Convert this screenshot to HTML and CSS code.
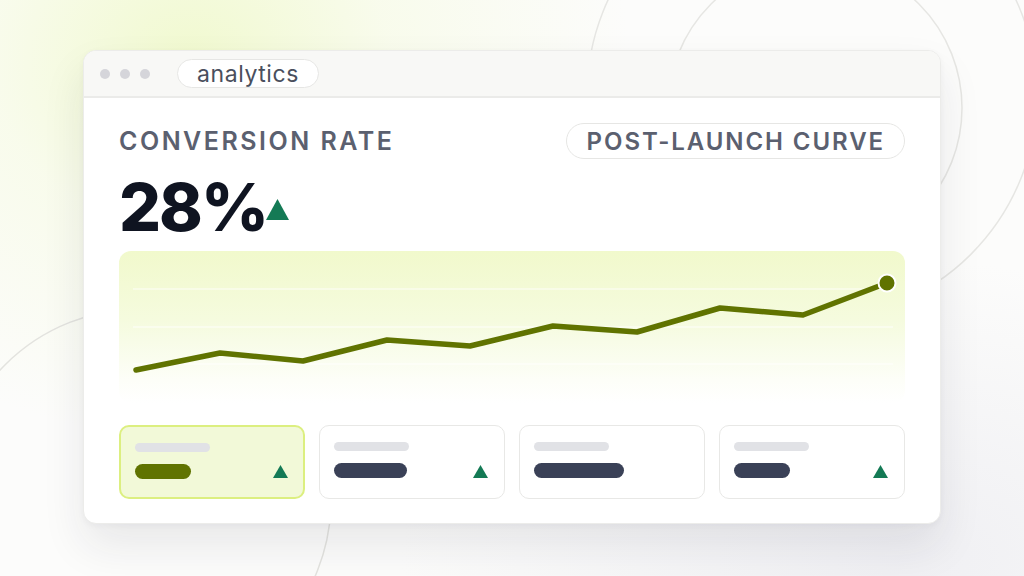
FILE: index.html
```html
<!DOCTYPE html>
<html lang="en">
<head>
<meta charset="utf-8">
<title>analytics</title>
<link rel="stylesheet" href="styles.css">
</head>
<body>
<svg class="backdrop" width="1024" height="576" viewBox="0 0 1024 576" aria-hidden="true">
  <circle cx="812" cy="95" r="225" fill="none" stroke="#e6e6e3" stroke-width="1.5"/>
  <circle cx="815" cy="108" r="147" fill="none" stroke="#e6e6e3" stroke-width="1.5"/>
  <circle cx="140" cy="500" r="191" fill="none" stroke="#e3e3df" stroke-width="1.5"/>
</svg>
<main class="window">
  <header class="titlebar">
    <span class="dot"></span><span class="dot"></span><span class="dot"></span>
    <span class="tab">analytics</span>
  </header>
  <section class="body">
    <div class="head">
      <h1 class="label">CONVERSION RATE</h1>
      <span class="badge">POST-LAUNCH CURVE</span>
    </div>
    <div class="value">28%<svg class="up-big" width="23" height="21" viewBox="0 0 23 21"><polygon points="11.5,0 23,21 0,21" fill="#147a55"/></svg></div>
    <div class="chart">
      <svg width="787" height="152" viewBox="0 0 787 152">
        <line x1="14" y1="38" x2="774" y2="38" class="grid"/>
        <line x1="14" y1="76" x2="774" y2="76" class="grid"/>
        <line x1="14" y1="113" x2="774" y2="113" class="grid"/>
        <polyline points="17,119 101,102 184,110 268,89 351,95 434,75 518,81 601,57 684,64 768,32" fill="none" stroke="#607300" stroke-width="5.5" stroke-linejoin="round" stroke-linecap="round"/>
        <circle cx="768" cy="32" r="8.5" fill="#607300" stroke="#ffffff" stroke-width="2"/>
      </svg>
    </div>
    <div class="cards">
      <div class="card active">
        <span class="bar-light"></span>
        <div class="row"><span class="bar-dark olive" style="width:56px"></span><svg class="up" width="15" height="13" viewBox="0 0 15 13"><polygon points="7.5,0 15,13 0,13" fill="#147a55"/></svg></div>
      </div>
      <div class="card">
        <span class="bar-light"></span>
        <div class="row"><span class="bar-dark" style="width:73px"></span><svg class="up" width="15" height="13" viewBox="0 0 15 13"><polygon points="7.5,0 15,13 0,13" fill="#147a55"/></svg></div>
      </div>
      <div class="card">
        <span class="bar-light"></span>
        <div class="row"><span class="bar-dark" style="width:90px"></span></div>
      </div>
      <div class="card">
        <span class="bar-light"></span>
        <div class="row"><span class="bar-dark" style="width:56px"></span><svg class="up" width="15" height="13" viewBox="0 0 15 13"><polygon points="7.5,0 15,13 0,13" fill="#147a55"/></svg></div>
      </div>
    </div>
  </section>
</main>
</body>
</html>
```
FILE: styles.css
```css
* { box-sizing: border-box; }
html, body { margin: 0; padding: 0; }
body {
  width: 1024px;
  height: 576px;
  overflow: hidden;
  position: relative;
  font-family: Inter, "Liberation Sans", sans-serif;
  background:
    radial-gradient(ellipse 440px 380px at 190px 60px, rgba(240, 249, 205, 0.95) 0%, rgba(246, 251, 226, 0.6) 45%, rgba(255,255,255,0) 100%),
    radial-gradient(ellipse 500px 300px at 900px 560px, rgba(238, 238, 242, 0.9) 0%, rgba(250,250,250,0) 100%),
    #fcfcfb;
  padding: 50px 0 0 83px;
}
.backdrop {
  position: absolute;
  left: 0;
  top: 0;
  z-index: 0;
}
.window {
  position: relative;
  z-index: 1;
  width: 858px;
  height: 474px;
  background: #ffffff;
  border: 1px solid #ececea;
  border-radius: 13px;
  box-shadow: 0 22px 44px rgba(30, 30, 50, 0.09), 0 2px 6px rgba(30, 30, 50, 0.04);
  overflow: hidden;
}
.titlebar {
  height: 47px;
  background: #f8f8f6;
  border-bottom: 2px solid #ebebe9;
  display: flex;
  align-items: center;
  padding-left: 16px;
  gap: 10px;
}
.dot {
  width: 10px;
  height: 10px;
  border-radius: 50%;
  background: #d5d5da;
}
.tab {
  margin-left: 17px;
  height: 29px;
  padding: 0 19px;
  border: 1.5px solid #e6e6e4;
  border-radius: 15px;
  background: #ffffff;
  display: flex;
  align-items: center;
  font-size: 23px;
  color: #4a4f5d;
  letter-spacing: 0.025em;
}
.body {
  padding: 25px 35px 0 35px;
}
.head {
  display: flex;
  justify-content: space-between;
  align-items: center;
  height: 36px;
}
.label {
  margin: 0;
  font-size: 25px;
  font-weight: 600;
  letter-spacing: 0.1em;
  color: #5b606f;
}
.badge {
  height: 36px;
  padding: 0 19px 0 20px;
  border: 1.5px solid #e6e6e4;
  border-radius: 18px;
  display: flex;
  align-items: center;
  font-size: 24px;
  font-weight: 600;
  letter-spacing: 0.08em;
  color: #5b606f;
}
.value {
  margin-top: 15px;
  height: 66px;
  line-height: 66px;
  font-size: 66px;
  font-weight: 800;
  letter-spacing: -0.03em;
  color: #0f1421;
  display: flex;
  align-items: flex-start;
}
.up-big {
  margin-top: 25px;
  margin-left: -1px;
}
.chart {
  margin-top: 11px;
  height: 152px;
  border-radius: 12px;
  background: linear-gradient(180deg, #f1f9cc 0%, #f5fbde 45%, #fdfef8 85%, #ffffff 100%);
}
.chart svg { display: block; }
.grid {
  stroke: rgba(255, 255, 255, 0.85);
  stroke-width: 1;
}
.cards {
  margin-top: 22px;
  display: grid;
  grid-template-columns: repeat(4, 186px);
  gap: 14px;
}
.card {
  height: 74px;
  border: 1.5px solid #e8e8e6;
  border-radius: 10px;
  background: #ffffff;
  padding: 16px 16px 0 14px;
  display: flex;
  flex-direction: column;
  gap: 12px;
}
.card.active {
  background: #f2f9d8;
  border: 2px solid #dcef80;
  padding: 15.5px 15.5px 0 13.5px;
}
.bar-light {
  width: 75px;
  height: 9px;
  border-radius: 5px;
  background: #e1e2e6;
}
.row {
  display: flex;
  align-items: center;
  justify-content: space-between;
  height: 15px;
}
.bar-dark {
  height: 15px;
  border-radius: 8px;
  background: #3a4157;
}
.bar-dark.olive { background: #607300; }
.up { display: block; margin-top: 1px; }
```
